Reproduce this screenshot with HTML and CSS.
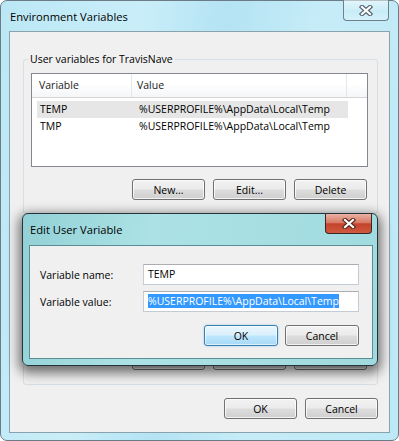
FILE: index.html
```html
<!DOCTYPE html>
<html lang="en">
<head>
  <meta charset="UTF-8">
  <title>Environment Variables</title>
  <link rel="stylesheet" href="styles.css">
</head>
<body>
  <div class="window">
    <div class="titlebar">
      <span class="title">Environment Variables</span>
      <div class="close">
        <svg width="14" height="11" viewBox="0 0 14 11">
          <path d="M3 2 L11 9 M11 2 L3 9" stroke="#55636e" stroke-width="4.4" stroke-linecap="square" fill="none"/>
          <path d="M3 2 L11 9 M11 2 L3 9" stroke="#fff" stroke-width="2.2" stroke-linecap="square" fill="none"/>
        </svg>
      </div>
    </div>

    <div class="panel">
      <div class="group user">
        <div class="group-title">User variables for TravisNave</div>
        <div class="list">
          <div class="list-head">
            <span class="col-var">Variable</span>
            <span class="col-val">Value</span>
            <span class="col-rest"></span>
          </div>
          <div class="rows">
            <div class="row selected">
              <span class="col-var">TEMP</span>
              <span class="col-val">%USERPROFILE%\AppData\Local\Temp</span>
            </div>
            <div class="row">
              <span class="col-var">TMP</span>
              <span class="col-val">%USERPROFILE%\AppData\Local\Temp</span>
            </div>
          </div>
        </div>
        <div class="buttons">
          <button class="btn">New...</button>
          <button class="btn">Edit...</button>
          <button class="btn">Delete</button>
        </div>
      </div>

      <!-- system variables box, mostly covered by the dialog -->
      <div class="group system">
        <div class="group-title"></div>
        <div class="list tall"></div>
        <div class="buttons">
          <button class="btn"></button>
          <button class="btn"></button>
          <button class="btn"></button>
        </div>
      </div>

      <div class="footer">
        <button class="btn">OK</button>
        <button class="btn">Cancel</button>
      </div>
    </div>

    <!-- modal edit dialog sits over the main window -->
    <div class="dialog">
      <div class="dialog-titlebar">
        <span class="title">Edit User Variable</span>
        <div class="close red">
          <svg width="14" height="11" viewBox="0 0 14 11">
            <path d="M3 2 L11 9 M11 2 L3 9" stroke="#5a2a22" stroke-width="4.4" stroke-linecap="square" fill="none"/>
            <path d="M3 2 L11 9 M11 2 L3 9" stroke="#fff" stroke-width="2.2" stroke-linecap="square" fill="none"/>
          </svg>
        </div>
      </div>
      <div class="dialog-body">
        <div class="field">
          <label>Variable name:</label>
          <div class="input">TEMP</div>
        </div>
        <div class="field">
          <label>Variable value:</label>
          <div class="input"><span class="sel">%USERPROFILE%\AppData\Local\Temp</span></div>
        </div>
        <div class="dialog-buttons">
          <button class="btn default">OK</button>
          <button class="btn">Cancel</button>
        </div>
      </div>
    </div>
  </div>
</body>
</html>
```

FILE: styles.css
```css
body {
  margin: 0;
  background: #fff;
  font-family: "Segoe UI", "Open Sans", sans-serif;
  font-size: 10.5px;
  color: #000;
}
.window {
  position: relative;
  box-sizing: border-box;
  width: 399px;
  height: 441px;
  border: 1px solid #6b7c88;
  border-radius: 7px;
  padding: 0 8px 7px 8px;
  display: flex;
  flex-direction: column;
  background: linear-gradient(100deg, #bbe7f5 0%, #c9eef9 30%, #b4e3f3 48%, #c6ecf8 68%, #bde9f6 100%);
}
.titlebar {
  height: 30px;
  display: flex;
  justify-content: space-between;
  align-items: flex-start;
}
.title {
  font-size: 11.2px;
}
.titlebar .title {
  line-height: 31px;
  padding-left: 1px;
}
.close {
  box-sizing: border-box;
  width: 46px;
  height: 21px;
  margin: -1px 1px 0 0;
  border: 1px solid #6e808e;
  border-top: none;
  border-radius: 0 0 4px 4px;
  background: linear-gradient(rgba(255,255,255,0.55), rgba(255,255,255,0.15) 50%, rgba(255,255,255,0.05) 51%, rgba(255,255,255,0.3));
  display: flex;
  align-items: center;
  justify-content: center;
}
.panel {
  flex: 1;
  border: 1px solid #8aa1ae;
  background: #f0f0f0;
  display: flex;
  flex-direction: column;
}
.group {
  margin: 27px 11px 0 13px;
  border: 1px solid #d5dfe5;
  border-radius: 3px;
  padding: 0 9px 13px 7px;
}
.group.system {
  margin-top: 5px;
  padding-bottom: 14px;
}
.group-title {
  width: fit-content;
  min-height: 15px;
  margin: -8px 0 0 -3px;
  padding: 0 2px;
  line-height: 15px;
  background: #f0f0f0;
}
.list {
  margin-top: 6px;
  height: 94px;
  box-sizing: border-box;
  border: 1px solid #828790;
  background: #fff;
}
.list.tall {
  height: 104px;
}
.list-head {
  display: flex;
  height: 23px;
  border-bottom: 1px solid #d5d5d5;
  background: linear-gradient(#ffffff 0%, #ffffff 40%, #f4f6f8 100%);
  color: #222;
}
.list-head span {
  line-height: 23px;
  border-right: 1px solid #e3e6ea;
}
.list-head .col-var {
  width: 100px;
  padding-left: 7px;
  box-sizing: border-box;
}
.list-head .col-val {
  width: 215px;
  padding-left: 5px;
  box-sizing: border-box;
}
.list-head .col-rest {
  flex: 1;
  border-right: none;
}
.rows {
  padding: 3px 0 0 5px;
}
.row {
  display: flex;
  width: 311px;
  height: 17px;
  line-height: 17px;
  white-space: nowrap;
}
.row.selected {
  background: #e6e6e6;
}
.row .col-var {
  flex-shrink: 0;
  width: 96px;
  padding-left: 3px;
  box-sizing: border-box;
}
.row .col-val {
  padding-left: 6px;
}
.buttons {
  display: flex;
  justify-content: flex-end;
  gap: 8px;
  margin: 12px 1px 0 0;
}
.btn {
  box-sizing: border-box;
  width: 73px;
  height: 21px;
  padding: 0;
  border: 1px solid #707070;
  border-radius: 3px;
  background: linear-gradient(#f2f2f2 0%, #ebebeb 48%, #dddddd 52%, #cfcfcf 100%);
  box-shadow: inset 0 0 0 1px rgba(255,255,255,0.75);
  font: inherit;
  color: #000;
}
.btn.default {
  border-color: #3c7fb1;
  background: linear-gradient(#eaf6fd 0%, #d9f0fc 48%, #bee6fd 52%, #a7d9f5 100%);
  box-shadow: inset 0 0 0 1px rgba(255,255,255,0.6), 0 0 2px #7fc6f0;
}
.footer {
  display: flex;
  justify-content: flex-end;
  gap: 8px;
  margin: 13px 11px 0 0;
}

/* edit dialog */
.dialog {
  position: absolute;
  left: 21px;
  top: 212px;
  box-sizing: border-box;
  width: 356px;
  height: 153px;
  border: 1px solid #26333a;
  border-radius: 6px;
  padding: 0 4px 6px 6px;
  display: flex;
  flex-direction: column;
  background: linear-gradient(100deg, #92d1d6 0%, #ace2e5 35%, #a6dee2 65%, #a0dadf 100%);
  box-shadow: 0 4px 12px 3px rgba(0,0,0,0.55);
}
.dialog-titlebar {
  height: 31px;
  display: flex;
  justify-content: space-between;
  align-items: flex-start;
}
.dialog-titlebar .title {
  line-height: 31px;
  padding-left: 1px;
}
.close.red {
  width: 47px;
  height: 20px;
  margin: 0 1px 0 0;
  border: 1px solid #3a2622;
  border-top: none;
  background: linear-gradient(#eab1a3 0%, #d87b66 45%, #c3432b 52%, #cf5a3f 100%);
}
.dialog-body {
  flex: 1;
  border: 1px solid #5b8d95;
  background: #f0f0f0;
  padding: 18px 13px 0 10px;
}
.field {
  display: flex;
  align-items: center;
  margin-bottom: 6px;
}
.field label {
  width: 103px;
}
.input {
  box-sizing: border-box;
  width: 216px;
  height: 21px;
  line-height: 19px;
  padding-left: 4px;
  border: 1px solid #c5cbd3;
  border-top-color: #abadb3;
  background: #fff;
  white-space: nowrap;
  overflow: hidden;
}
.sel {
  background: #3399ff;
  color: #fff;
}
.dialog-buttons {
  display: flex;
  justify-content: flex-end;
  gap: 7px;
  margin-top: 13px;
}
.dialog-buttons .btn {
  width: 74px;
}
```
